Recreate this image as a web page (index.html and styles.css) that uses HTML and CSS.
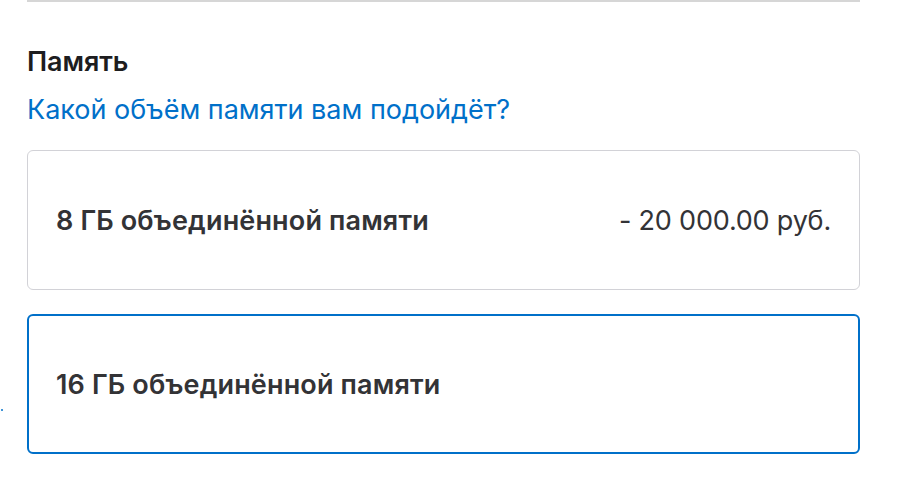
FILE: index.html
```html
<html lang="ru">
<head>
	<meta charset="UTF-8">
	<meta name="viewport" content="width=device-width, initial-scale=1.0">
	<title>Память</title>
	<link rel="stylesheet" href="styles.css">
</head>
<body>
	<span class="edge-dot"></span>
	<div class="config">
		<div class="divider"></div>
		<h2 class="title">Память</h2>
		<a href="#" class="help-link">Какой объём памяти вам подойдёт?</a>
		<div class="options">
			<label class="option">
				<span class="option-name">8 ГБ объединённой памяти</span>
				<span class="option-price">- 20 000.00 руб.</span>
			</label>
			<label class="option selected">
				<span class="option-name">16 ГБ объединённой памяти</span>
			</label>
		</div>
	</div>
</body>
</html>
```

FILE: styles.css
```css
*{
	margin: 0;
	padding: 0;
	box-sizing: border-box;
}
body{
	background: #fff;
	font-family: "Inter", "Noto Sans", sans-serif;
	color: #1d1d1f;
}
.edge-dot{
	position: absolute;
	left: 1px;
	top: 409px;
	width: 2px;
	height: 2px;
	border-radius: 50%;
	background: #0070c9;
}
.config{
	width: 860px;
	padding-left: 27px;
}
.divider{
	height: 2px;
	background: #d6d6d6;
}
.title{
	margin-top: 44px;
	font-size: 27px;
	line-height: 32px;
	font-weight: 600;
	letter-spacing: -0.1px;
}
.help-link{
	display: block;
	margin-top: 16px;
	font-size: 27px;
	line-height: 32px;
	color: #0070c9;
	text-decoration: none;
}
.options{
	margin-top: 24px;
	display: flex;
	flex-direction: column;
	gap: 24px;
}
.option{
	height: 140px;
	display: flex;
	align-items: center;
	justify-content: space-between;
	padding: 0 28px;
	border: 1px solid #d2d2d7;
	border-radius: 6px;
	font-size: 27px;
	color: #333336;
}
.option.selected{
	border: 2px solid #0070c9;
	padding: 0 27px;
}
.option-name{
	font-weight: 600;
	letter-spacing: 0.15px;
}
.option-price{
	font-weight: 400;
	letter-spacing: -0.2px;
}
```
